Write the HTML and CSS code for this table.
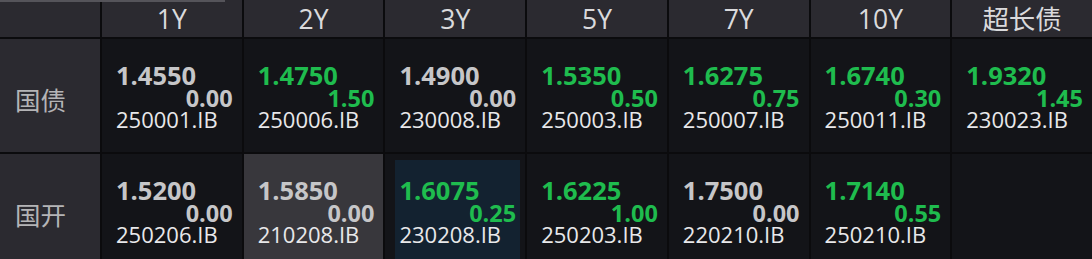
FILE: index.html
```html
<!DOCTYPE html>
<html lang="zh-CN">
<head>
<meta charset="utf-8">
<title>Bond Quotes</title>
<link rel="stylesheet" href="styles.css">
</head>
<body>
<div class="board">
  <div class="scroll-thumb"></div>
  <div class="grid">
    <div class="corner"></div>
    <div class="head">1Y</div>
    <div class="head">2Y</div>
    <div class="head">3Y</div>
    <div class="head">5Y</div>
    <div class="head">7Y</div>
    <div class="head">10Y</div>
    <div class="head">超长债</div>

    <div class="label">国债</div>
    <div class="cell"><div class="val flat">1.4550</div><div class="chg flat">0.00</div><div class="code">250001.IB</div></div>
    <div class="cell"><div class="val up">1.4750</div><div class="chg up">1.50</div><div class="code">250006.IB</div></div>
    <div class="cell"><div class="val flat">1.4900</div><div class="chg flat">0.00</div><div class="code">230008.IB</div></div>
    <div class="cell"><div class="val up">1.5350</div><div class="chg up">0.50</div><div class="code">250003.IB</div></div>
    <div class="cell"><div class="val up">1.6275</div><div class="chg up">0.75</div><div class="code">250007.IB</div></div>
    <div class="cell"><div class="val up">1.6740</div><div class="chg up">0.30</div><div class="code">250011.IB</div></div>
    <div class="cell"><div class="val up">1.9320</div><div class="chg up">1.45</div><div class="code">230023.IB</div></div>

    <div class="label">国开</div>
    <div class="cell"><div class="val flat">1.5200</div><div class="chg flat">0.00</div><div class="code">250206.IB</div></div>
    <div class="cell hover"><div class="val flat">1.5850</div><div class="chg flat">0.00</div><div class="code">210208.IB</div></div>
    <div class="cell selected"><div class="val up">1.6075</div><div class="chg up">0.25</div><div class="code">230208.IB</div></div>
    <div class="cell"><div class="val up">1.6225</div><div class="chg up">1.00</div><div class="code">250203.IB</div></div>
    <div class="cell"><div class="val flat">1.7500</div><div class="chg flat">0.00</div><div class="code">220210.IB</div></div>
    <div class="cell"><div class="val up">1.7140</div><div class="chg up">0.55</div><div class="code">250210.IB</div></div>
    <div class="cell"></div>
  </div>
</div>
</body>
</html>
```

FILE: styles.css
```css
html, body {
  margin: 0;
  padding: 0;
  background: #0b0b0d;
  overflow: hidden;
}

body {
  font-family: "Open Sans", "Noto Sans CJK SC", sans-serif;
  width: 1092px;
  height: 259px;
}

.board {
  position: relative;
  width: 1092px;
  height: 259px;
  overflow: hidden;
  background: #0b0b0d;
}

.scroll-thumb {
  position: absolute;
  left: 0;
  top: 0;
  width: 225px;
  height: 2px;
  background: #55545a;
}

.grid {
  display: grid;
  grid-template-columns: 100px repeat(7, 1fr);
  grid-template-rows: 37px 113px 113px;
  gap: 2px;
}

.corner,
.head,
.label {
  background: #2b2a30;
}

.head {
  display: flex;
  align-items: center;
  justify-content: center;
  padding-top: 1px;
  box-sizing: border-box;
  color: #dadadc;
  font-size: 26.5px;
  line-height: 36px;
  font-family: "Open Sans", "Noto Sans CJK SC", sans-serif;
}

.label {
  display: flex;
  align-items: center;
  padding: 6px 0 0 15px;
  box-sizing: border-box;
  color: #b4b4b6;
  font-size: 25.5px;
  font-family: "Noto Sans CJK SC", sans-serif;
}

.cell {
  background: #131418;
  display: flex;
  flex-direction: column;
  justify-content: center;
  padding: 0 9px 0 14px;
}

.cell.hover {
  background: #38373c;
}

.cell.selected {
  background-color: #131418;
  background-image: linear-gradient(#132230, #132230);
  background-repeat: no-repeat;
  background-position: 10px 6px;
  background-size: calc(100% - 15px) 100%;
}

.val {
  font-size: 25.5px;
  font-weight: 700;
  line-height: 25px;
}

.chg {
  font-size: 23.5px;
  font-weight: 700;
  line-height: 21px;
  text-align: right;
}

.code {
  font-size: 22px;
  line-height: 20px;
  color: #e8e8ea;
}

.flat {
  color: #c6c6c8;
}

.up {
  color: #1fbc4e;
}
```
